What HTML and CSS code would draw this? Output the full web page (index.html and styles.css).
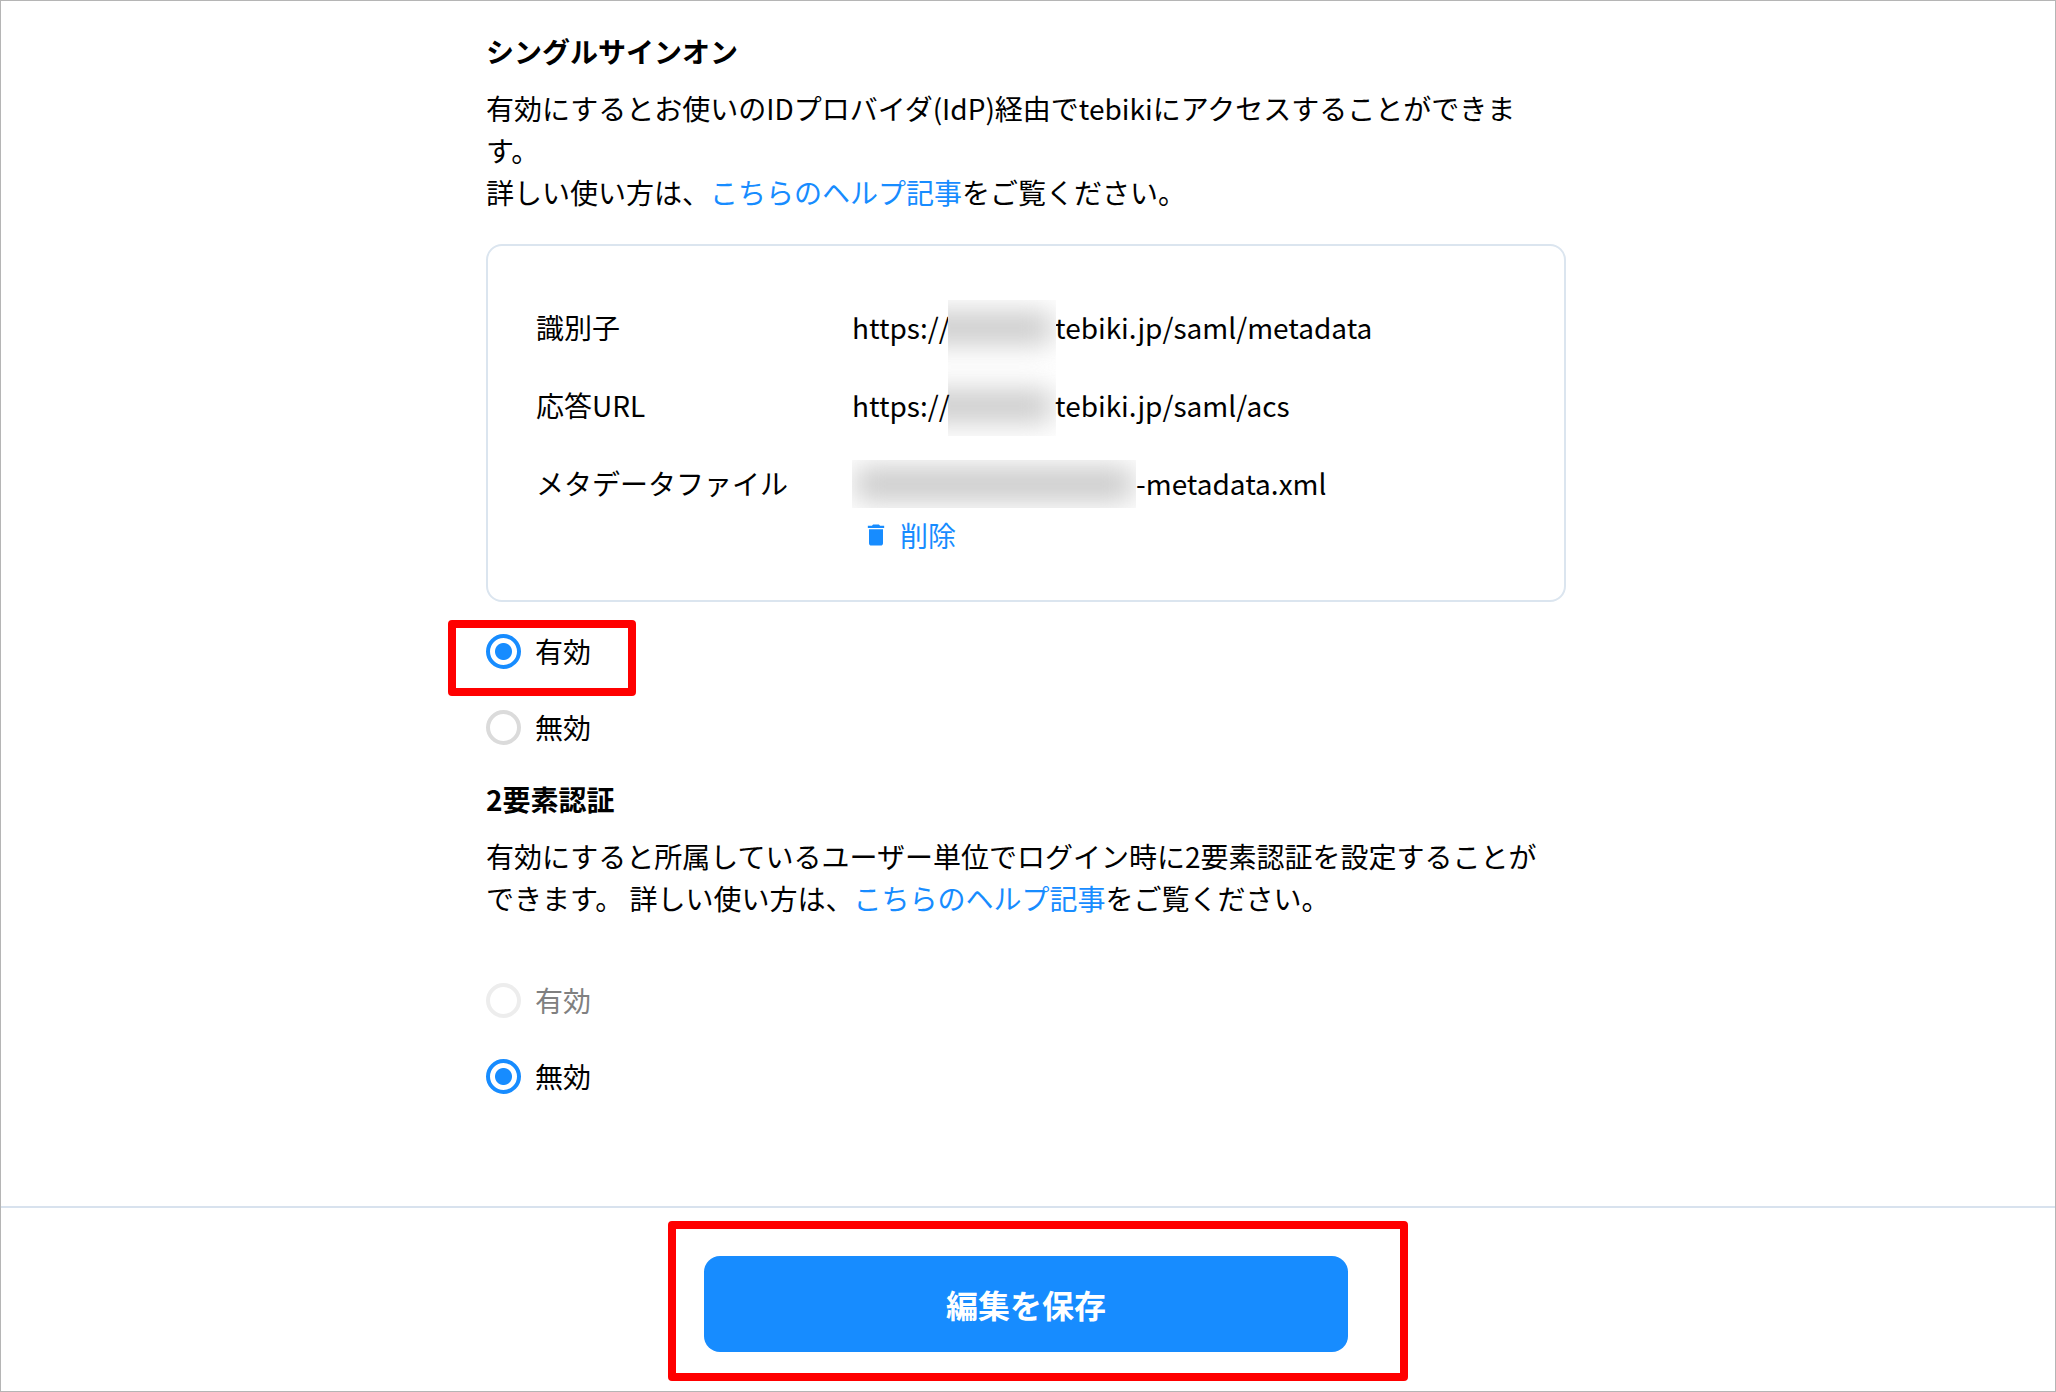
FILE: index.html
```
<!DOCTYPE html>
<html lang="ja">
<head>
  <meta charset="utf-8">
  <meta name="viewport" content="width=device-width, initial-scale=1">
  <title>セキュリティ設定</title>
  <link rel="stylesheet" href="styles.css">
</head>
<body>
<form class="page">
  <main class="content">

    <!-- SSO -->
    <section class="setting">
      <h2>シングルサインオン</h2>
      <p>有効にするとお使いのIDプロバイダ(IdP)経由でtebikiにアクセスすることができます。<br>詳しい使い方は、<a href="#">こちらのヘルプ記事</a>をご覧ください。</p>

      <dl class="card">
        <dt>識別子</dt>
        <dd>
          <span class="scheme">https://</span><span>tebiki.jp/saml/metadata</span>
          <span class="mask mask-host"></span>
        </dd>
        <dt>応答URL</dt>
        <dd><span class="scheme">https://</span><span>tebiki.jp/saml/acs</span></dd>
        <dt>メタデータファイル</dt>
        <dd>
          <span class="file-name">-metadata.xml</span>
          <span class="mask mask-file"></span>
          <button type="button" class="delete">
            <svg viewBox="0 0 24 24" aria-hidden="true"><path d="M6 19c0 1.1.9 2 2 2h8c1.1 0 2-.9 2-2V7H6v12zM19 4h-3.500l-1-1h-5l-1 1H5v2h14V4z"/></svg>
            削除
          </button>
        </dd>
      </dl>

      <div class="options">
        <label class="marked"><input type="radio" name="sso" checked>有効</label>
        <label><input type="radio" name="sso">無効</label>
      </div>
    </section>

    <!-- 2FA -->
    <section class="setting">
      <h2>2要素認証</h2>
      <p>有効にすると所属しているユーザー単位でログイン時に2要素認証を設定することができます。 詳しい使い方は、<a href="#">こちらのヘルプ記事</a>をご覧ください。</p>

      <div class="options options-spaced">
        <label class="disabled"><input type="radio" name="mfa" disabled>有効</label>
        <label><input type="radio" name="mfa" checked>無効</label>
      </div>
    </section>

  </main>

  <footer class="footer">
    <div class="save-wrap">
      <button type="submit" class="save">編集を保存</button>
    </div>
  </footer>
</form>
</body>
</html>
```
FILE: styles.css
```
* {
  box-sizing: border-box;
}
body {
  margin: 0;
  color: #000;
  background: #fff;
  font-family: "Noto Sans CJK JP", sans-serif;
  font-size: 28px;
  line-height: 42px;
}
a {
  color: #178cff;
  text-decoration: none;
}
button {
  border: 0;
  font: inherit;
  cursor: pointer;
}
.page {
  display: flex;
  flex-direction: column;
  min-height: 100vh;
  border: 1px solid #b5b5b5;
}
.content {
  flex: 1;
  width: 100%;
  max-width: 1084px;
  margin: 0 auto;
  padding: 29px 4px 48px 0;
}
.setting {
  margin-bottom: 30px;
}
h2 {
  margin: 0 0 15px;
  font-size: 28px;
  font-weight: 700;
}
p {
  margin: 0;
  padding-right: 12px;
}

/* identifier / url / metadata box */
.card {
  display: grid;
  grid-template-columns: 316px 1fr;
  row-gap: 36px;
  margin: 31px 0 28px;
  padding: 60px 48px 44px;
  border: 2px solid #dbe5ef;
  border-radius: 16px;
}
.card dd {
  position: relative;
  margin: 0;
}
.scheme {
  display: inline-block;
  width: 203px;
}
.file-name {
  display: block;
  padding-left: 284px;
}
.mask {
  position: absolute;
  overflow: hidden;
  background: #fff;
}
.mask::before,
.mask::after {
  content: "";
  position: absolute;
  background: #c9c9c9;
  filter: blur(14px);
}
.mask-host {
  top: -6px;
  left: 96px;
  width: 108px;
  height: 136px;
}
.mask-host::before,
.mask-host::after {
  left: -30px;
  right: 4px;
  height: 32px;
}
.mask-host::before {
  top: 12px;
}
.mask-host::after {
  bottom: 14px;
}
.mask-file {
  top: -2px;
  left: 0;
  width: 284px;
  height: 48px;
}
.mask-file::before {
  inset: 7px 3px;
}
.delete {
  display: flex;
  align-items: center;
  gap: 10px;
  margin-top: 10px;
  padding: 0 10px;
  color: #178cff;
  background: none;
}
.delete svg {
  width: 28px;
  height: 28px;
  fill: currentColor;
}

/* radios */
.options {
  display: flex;
  flex-direction: column;
  align-items: flex-start;
  gap: 34px;
}
.options-spaced {
  margin-top: 60px;
}
.options label {
  position: relative;
  display: flex;
  align-items: center;
  gap: 14px;
}
.options input {
  appearance: none;
  width: 35px;
  height: 35px;
  margin: 0;
  border: 4px solid #dbdbdb;
  border-radius: 50%;
}
.options input:checked {
  border-color: #178cff;
  background: radial-gradient(circle, #178cff 8px, #fff 9px);
}
.options .disabled {
  color: #808080;
}
.options .disabled input {
  border-color: #ededed;
}

/* red frames round the things to click */
.marked::after,
.save-wrap::after {
  content: "";
  position: absolute;
  border: 8px solid #f00;
  border-radius: 4px;
  pointer-events: none;
}
.marked::after {
  inset: -10px -45px -24px -38px;
}
.save-wrap::after {
  inset: -35px -60px -29px -36px;
}

.footer {
  display: flex;
  justify-content: center;
  padding: 48px 4px 39px 0;
  border-top: 2px solid #d8e2ee;
}
.save-wrap {
  position: relative;
  width: 644px;
}
.save {
  width: 100%;
  height: 96px;
  border-radius: 16px;
  color: #fff;
  background: #178cff;
  font-size: 32px;
  font-weight: 700;
}
```
